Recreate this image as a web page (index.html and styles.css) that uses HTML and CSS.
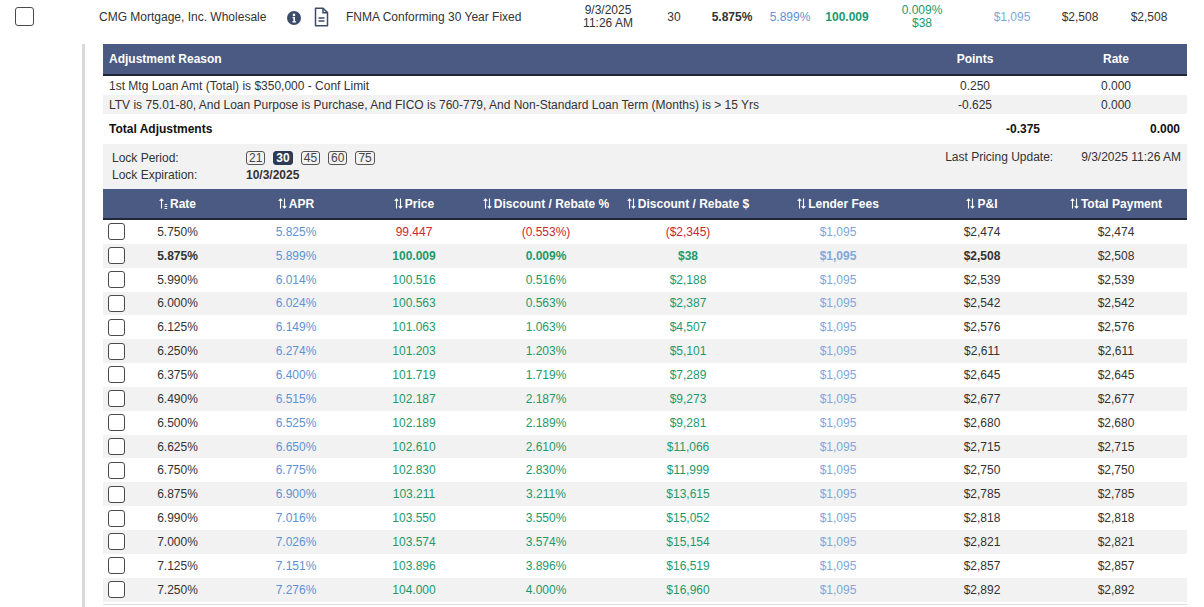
FILE: index.html
```html
<!DOCTYPE html>
<html>
<head>
<meta charset="utf-8">
<title>Pricing</title>
<link rel="stylesheet" href="styles.css">
</head>
<body>
<div class="lender-row">
  <div class="c-check"><span class="cb cb-lg"></span></div>
  <div class="c-name">CMG Mortgage, Inc. Wholesale</div>
  <div class="c-icons">
    <svg class="ic-info" width="14" height="14" viewBox="0 0 14 14"><circle cx="7" cy="7" r="7" fill="#3d4b6c"/><circle cx="7" cy="3.9" r="1.3" fill="#fff"/><path d="M5.6 6h2.4v4.3h1v1.2H5.4v-1.2h1V7.2h-0.8z" fill="#fff"/></svg>
    <svg class="ic-doc" width="15" height="20" viewBox="0 0 15 20"><path d="M1.5 1.2h7.6l4.4 4.4v13.2H1.5z" fill="none" stroke="#3d4b6c" stroke-width="1.5" stroke-linejoin="round"/><path d="M9 1.2v4.6h4.5" fill="none" stroke="#3d4b6c" stroke-width="1.5"/><path d="M4.5 11h6M4.5 14h6" stroke="#3d4b6c" stroke-width="1.5"/></svg>
  </div>
  <div class="c-product">FNMA Conforming 30 Year Fixed</div>
  <div class="c-date ctr two">9/3/2025<br>11:26 AM</div>
  <div class="c-lock ctr">30</div>
  <div class="c-rate ctr b">5.875%</div>
  <div class="c-apr ctr blue">5.899%</div>
  <div class="c-price ctr b green">100.009</div>
  <div class="c-disc ctr two green">0.009%<br>$38</div>
  <div class="c-fees ctr blue2">$1,095</div>
  <div class="c-pi ctr">$2,508</div>
  <div class="c-tp ctr">$2,508</div>
</div>

<div class="details">
  <div class="adj">
    <div class="adj-grid adj-head">
      <div class="adj-reason">Adjustment Reason</div>
      <div class="ctr">Points</div>
      <div class="ctr">Rate</div>
    </div>
    <div class="adj-grid adj-row">
      <div class="adj-reason">1st Mtg Loan Amt (Total) is $350,000 - Conf Limit</div>
      <div class="ctr">0.250</div>
      <div class="ctr">0.000</div>
    </div>
    <div class="adj-grid adj-row alt">
      <div class="adj-reason">LTV is 75.01-80, And Loan Purpose is Purchase, And FICO is 760-779, And Non-Standard Loan Term (Months) is &gt; 15 Yrs</div>
      <div class="ctr">-0.625</div>
      <div class="ctr">0.000</div>
    </div>
    <div class="adj-grid adj-total">
      <div class="adj-reason">Total Adjustments</div>
      <div class="tot-points">-0.375</div>
      <div class="tot-rate">0.000</div>
    </div>
  </div>

  <div class="lock">
    <div class="lock-left">
      <div class="lock-line"><span class="lock-label">Lock Period:</span>
        <span class="lock-btns"><span class="lb">21</span><span class="lb sel">30</span><span class="lb">45</span><span class="lb">60</span><span class="lb">75</span></span>
      </div>
      <div class="lock-line"><span class="lock-label">Lock Expiration:</span><span class="b">10/3/2025</span></div>
    </div>
    <div class="lock-right">
      <span class="upd-label">Last Pricing Update:</span><span>9/3/2025 11:26 AM</span>
    </div>
  </div>

  <div class="rates">
    <div class="rgrid rhead">
      <div></div>
      <div class="rc-rate"><svg class="si" width="9" height="11" viewBox="0 0 9 11"><path d="M2.5 10.5V1M0.7 2.9L2.5 1 4.3 2.9M5.6 6.5h2.6M5.6 8.5h2.6M5.6 10.5h2.6" fill="none" stroke="#fff" stroke-width="1.1"/></svg>Rate</div>
      <div><svg class="si" width="9" height="11" viewBox="0 0 9 11"><path d="M2.5 10.5V1M0.7 2.9L2.5 1 4.3 2.9M6.5 0.5v9.5M4.7 8.1L6.5 10 8.3 8.1" fill="none" stroke="#fff" stroke-width="1.1"/></svg>APR</div>
      <div><svg class="si" width="9" height="11" viewBox="0 0 9 11"><path d="M2.5 10.5V1M0.7 2.9L2.5 1 4.3 2.9M6.5 0.5v9.5M4.7 8.1L6.5 10 8.3 8.1" fill="none" stroke="#fff" stroke-width="1.1"/></svg>Price</div>
      <div><svg class="si" width="9" height="11" viewBox="0 0 9 11"><path d="M2.5 10.5V1M0.7 2.9L2.5 1 4.3 2.9M6.5 0.5v9.5M4.7 8.1L6.5 10 8.3 8.1" fill="none" stroke="#fff" stroke-width="1.1"/></svg>Discount / Rebate %</div>
      <div><svg class="si" width="9" height="11" viewBox="0 0 9 11"><path d="M2.5 10.5V1M0.7 2.9L2.5 1 4.3 2.9M6.5 0.5v9.5M4.7 8.1L6.5 10 8.3 8.1" fill="none" stroke="#fff" stroke-width="1.1"/></svg>Discount / Rebate $</div>
      <div><svg class="si" width="9" height="11" viewBox="0 0 9 11"><path d="M2.5 10.5V1M0.7 2.9L2.5 1 4.3 2.9M6.5 0.5v9.5M4.7 8.1L6.5 10 8.3 8.1" fill="none" stroke="#fff" stroke-width="1.1"/></svg>Lender Fees</div>
      <div><svg class="si" width="9" height="11" viewBox="0 0 9 11"><path d="M2.5 10.5V1M0.7 2.9L2.5 1 4.3 2.9M6.5 0.5v9.5M4.7 8.1L6.5 10 8.3 8.1" fill="none" stroke="#fff" stroke-width="1.1"/></svg>P&amp;I</div>
      <div><svg class="si" width="9" height="11" viewBox="0 0 9 11"><path d="M2.5 10.5V1M0.7 2.9L2.5 1 4.3 2.9M6.5 0.5v9.5M4.7 8.1L6.5 10 8.3 8.1" fill="none" stroke="#fff" stroke-width="1.1"/></svg>Total Payment</div>
    </div>

    <div class="rgrid rrow"><div class="rc-cb"><span class="cb"></span></div><div class="rc-rate">5.750%</div><div class="blue">5.825%</div><div class="red">99.447</div><div class="red">(0.553%)</div><div class="red">($2,345)</div><div class="blue2">$1,095</div><div>$2,474</div><div>$2,474</div></div>
    <div class="rgrid rrow alt cur"><div class="rc-cb"><span class="cb"></span></div><div class="rc-rate b">5.875%</div><div class="blue">5.899%</div><div class="green b">100.009</div><div class="green b">0.009%</div><div class="green b">$38</div><div class="blue2 b">$1,095</div><div class="b">$2,508</div><div>$2,508</div></div>
    <div class="rgrid rrow"><div class="rc-cb"><span class="cb"></span></div><div class="rc-rate">5.990%</div><div class="blue">6.014%</div><div class="green">100.516</div><div class="green">0.516%</div><div class="green">$2,188</div><div class="blue2">$1,095</div><div>$2,539</div><div>$2,539</div></div>
    <div class="rgrid rrow alt"><div class="rc-cb"><span class="cb"></span></div><div class="rc-rate">6.000%</div><div class="blue">6.024%</div><div class="green">100.563</div><div class="green">0.563%</div><div class="green">$2,387</div><div class="blue2">$1,095</div><div>$2,542</div><div>$2,542</div></div>
    <div class="rgrid rrow"><div class="rc-cb"><span class="cb"></span></div><div class="rc-rate">6.125%</div><div class="blue">6.149%</div><div class="green">101.063</div><div class="green">1.063%</div><div class="green">$4,507</div><div class="blue2">$1,095</div><div>$2,576</div><div>$2,576</div></div>
    <div class="rgrid rrow alt"><div class="rc-cb"><span class="cb"></span></div><div class="rc-rate">6.250%</div><div class="blue">6.274%</div><div class="green">101.203</div><div class="green">1.203%</div><div class="green">$5,101</div><div class="blue2">$1,095</div><div>$2,611</div><div>$2,611</div></div>
    <div class="rgrid rrow"><div class="rc-cb"><span class="cb"></span></div><div class="rc-rate">6.375%</div><div class="blue">6.400%</div><div class="green">101.719</div><div class="green">1.719%</div><div class="green">$7,289</div><div class="blue2">$1,095</div><div>$2,645</div><div>$2,645</div></div>
    <div class="rgrid rrow alt"><div class="rc-cb"><span class="cb"></span></div><div class="rc-rate">6.490%</div><div class="blue">6.515%</div><div class="green">102.187</div><div class="green">2.187%</div><div class="green">$9,273</div><div class="blue2">$1,095</div><div>$2,677</div><div>$2,677</div></div>
    <div class="rgrid rrow"><div class="rc-cb"><span class="cb"></span></div><div class="rc-rate">6.500%</div><div class="blue">6.525%</div><div class="green">102.189</div><div class="green">2.189%</div><div class="green">$9,281</div><div class="blue2">$1,095</div><div>$2,680</div><div>$2,680</div></div>
    <div class="rgrid rrow alt"><div class="rc-cb"><span class="cb"></span></div><div class="rc-rate">6.625%</div><div class="blue">6.650%</div><div class="green">102.610</div><div class="green">2.610%</div><div class="green">$11,066</div><div class="blue2">$1,095</div><div>$2,715</div><div>$2,715</div></div>
    <div class="rgrid rrow"><div class="rc-cb"><span class="cb"></span></div><div class="rc-rate">6.750%</div><div class="blue">6.775%</div><div class="green">102.830</div><div class="green">2.830%</div><div class="green">$11,999</div><div class="blue2">$1,095</div><div>$2,750</div><div>$2,750</div></div>
    <div class="rgrid rrow alt"><div class="rc-cb"><span class="cb"></span></div><div class="rc-rate">6.875%</div><div class="blue">6.900%</div><div class="green">103.211</div><div class="green">3.211%</div><div class="green">$13,615</div><div class="blue2">$1,095</div><div>$2,785</div><div>$2,785</div></div>
    <div class="rgrid rrow"><div class="rc-cb"><span class="cb"></span></div><div class="rc-rate">6.990%</div><div class="blue">7.016%</div><div class="green">103.550</div><div class="green">3.550%</div><div class="green">$15,052</div><div class="blue2">$1,095</div><div>$2,818</div><div>$2,818</div></div>
    <div class="rgrid rrow alt"><div class="rc-cb"><span class="cb"></span></div><div class="rc-rate">7.000%</div><div class="blue">7.026%</div><div class="green">103.574</div><div class="green">3.574%</div><div class="green">$15,154</div><div class="blue2">$1,095</div><div>$2,821</div><div>$2,821</div></div>
    <div class="rgrid rrow"><div class="rc-cb"><span class="cb"></span></div><div class="rc-rate">7.125%</div><div class="blue">7.151%</div><div class="green">103.896</div><div class="green">3.896%</div><div class="green">$16,519</div><div class="blue2">$1,095</div><div>$2,857</div><div>$2,857</div></div>
    <div class="rgrid rrow alt"><div class="rc-cb"><span class="cb"></span></div><div class="rc-rate">7.250%</div><div class="blue">7.276%</div><div class="green">104.000</div><div class="green">4.000%</div><div class="green">$16,960</div><div class="blue2">$1,095</div><div>$2,892</div><div>$2,892</div></div>
  </div>
</div>
</body>
</html>
```

FILE: styles.css
```css
* { box-sizing: border-box; }
html, body { margin: 0; padding: 0; background: #fff; }
body {
  font-family: "Liberation Sans", Arial, sans-serif;
  font-size: 12px;
  color: #333;
  width: 1204px;
  overflow: hidden;
}

.b { font-weight: bold; }
.ctr { text-align: center; }
.blue { color: #5e92d1; }
.blue2 { color: #7fa7d8; }
.green { color: #1c9a6c; }
.red { color: #c62a30; }

.cb {
  display: block;
  width: 17px;
  height: 17px;
  border: 1px solid #4a4a4a;
  border-radius: 3px;
  background: #fff;
}
.cb-lg { width: 19px; height: 19px; }

/* top lender row */
.lender-row {
  display: flex;
  align-items: center;
  height: 33px;
  white-space: nowrap;
}
.lender-row > div { flex: none; }
.c-check { width: 99px; padding-left: 15px; }
.c-name { width: 181px; }
.c-icons {
  width: 66px;
  padding-left: 7px;
  display: flex;
  align-items: center;
  gap: 13px;
}
.ic-info { display: block; margin-top: 2px; }
.ic-doc { display: block; }
.c-product { width: 222px; }
.two { line-height: 13px; }
.c-date { width: 80px; }
.c-lock { width: 52px; }
.c-rate { width: 64px; }
.c-apr { width: 52px; }
.c-price { width: 62px; }
.c-disc { width: 88px; }
.c-fees { width: 92px; }
.c-pi { width: 44px; }
.c-tp { width: 94px; }

/* details block */
.details {
  margin-top: 11px;
  margin-left: 82px;
  border-left: 3px solid #d9d9d9;
  padding-left: 18px;
  padding-bottom: 30px;
  width: 1105px;
}

.adj-grid {
  display: grid;
  grid-template-columns: 1fr 140px 142px;
  align-items: center;
}
.adj-reason { padding-left: 6px; white-space: nowrap; }
.adj-head {
  height: 32px;
  background: #4a5a82;
  color: #fff;
  font-weight: bold;
  border-bottom: 2px solid #1f2738;
}
.adj-row { height: 19px; }
.alt { background: #f2f2f2; }
.adj-total {
  height: 30px;
  font-weight: bold;
  color: #111;
}
.tot-points { text-align: right; padding-right: 5px; }
.tot-rate { text-align: right; padding-right: 7px; }

/* lock block */
.lock {
  background: #f2f2f2;
  height: 45px;
  padding: 5px 6px 0 9px;
  display: flex;
  justify-content: space-between;
  align-items: flex-start;
}
.lock-line {
  display: flex;
  align-items: center;
  height: 17px;
}
.lock-label { width: 134px; flex: none; }
.lock-btns { display: flex; gap: 8px; }
.lb {
  display: block;
  height: 14px;
  min-width: 19px;
  padding: 0 2px;
  border: 1px solid #555;
  border-radius: 3px;
  line-height: 12px;
  text-align: center;
  color: #444;
}
.lb.sel {
  background: #2e3b57;
  border-color: #2e3b57;
  color: #fff;
  font-weight: bold;
}
.lock-right {
  display: flex;
  align-items: center;
  height: 17px;
  margin-top: -1px;
}
.upd-label { width: 136px; }

/* rates table */
.rates {
  padding-bottom: 2px;
  border-bottom: 1px solid #dedede;
}
.rgrid {
  display: grid;
  grid-template-columns: 35px 99px 118px 118px 146px 138px 162px 126px 142px;
  align-items: center;
  text-align: center;
  white-space: nowrap;
}
.rhead {
  height: 31px;
  background: #4a5a82;
  color: #fff;
  font-weight: bold;
  border-bottom: 2px solid #1f2738;
}
.rhead > div {
  display: flex;
  justify-content: center;
  align-items: center;
  gap: 2px;
}
.rhead .rc-rate { padding-right: 20px; }
.si { display: block; flex: none; }
.rrow { height: 23.85px; }
.rc-rate { padding-right: 20px; }
.rc-cb { padding-left: 5px; }
```
